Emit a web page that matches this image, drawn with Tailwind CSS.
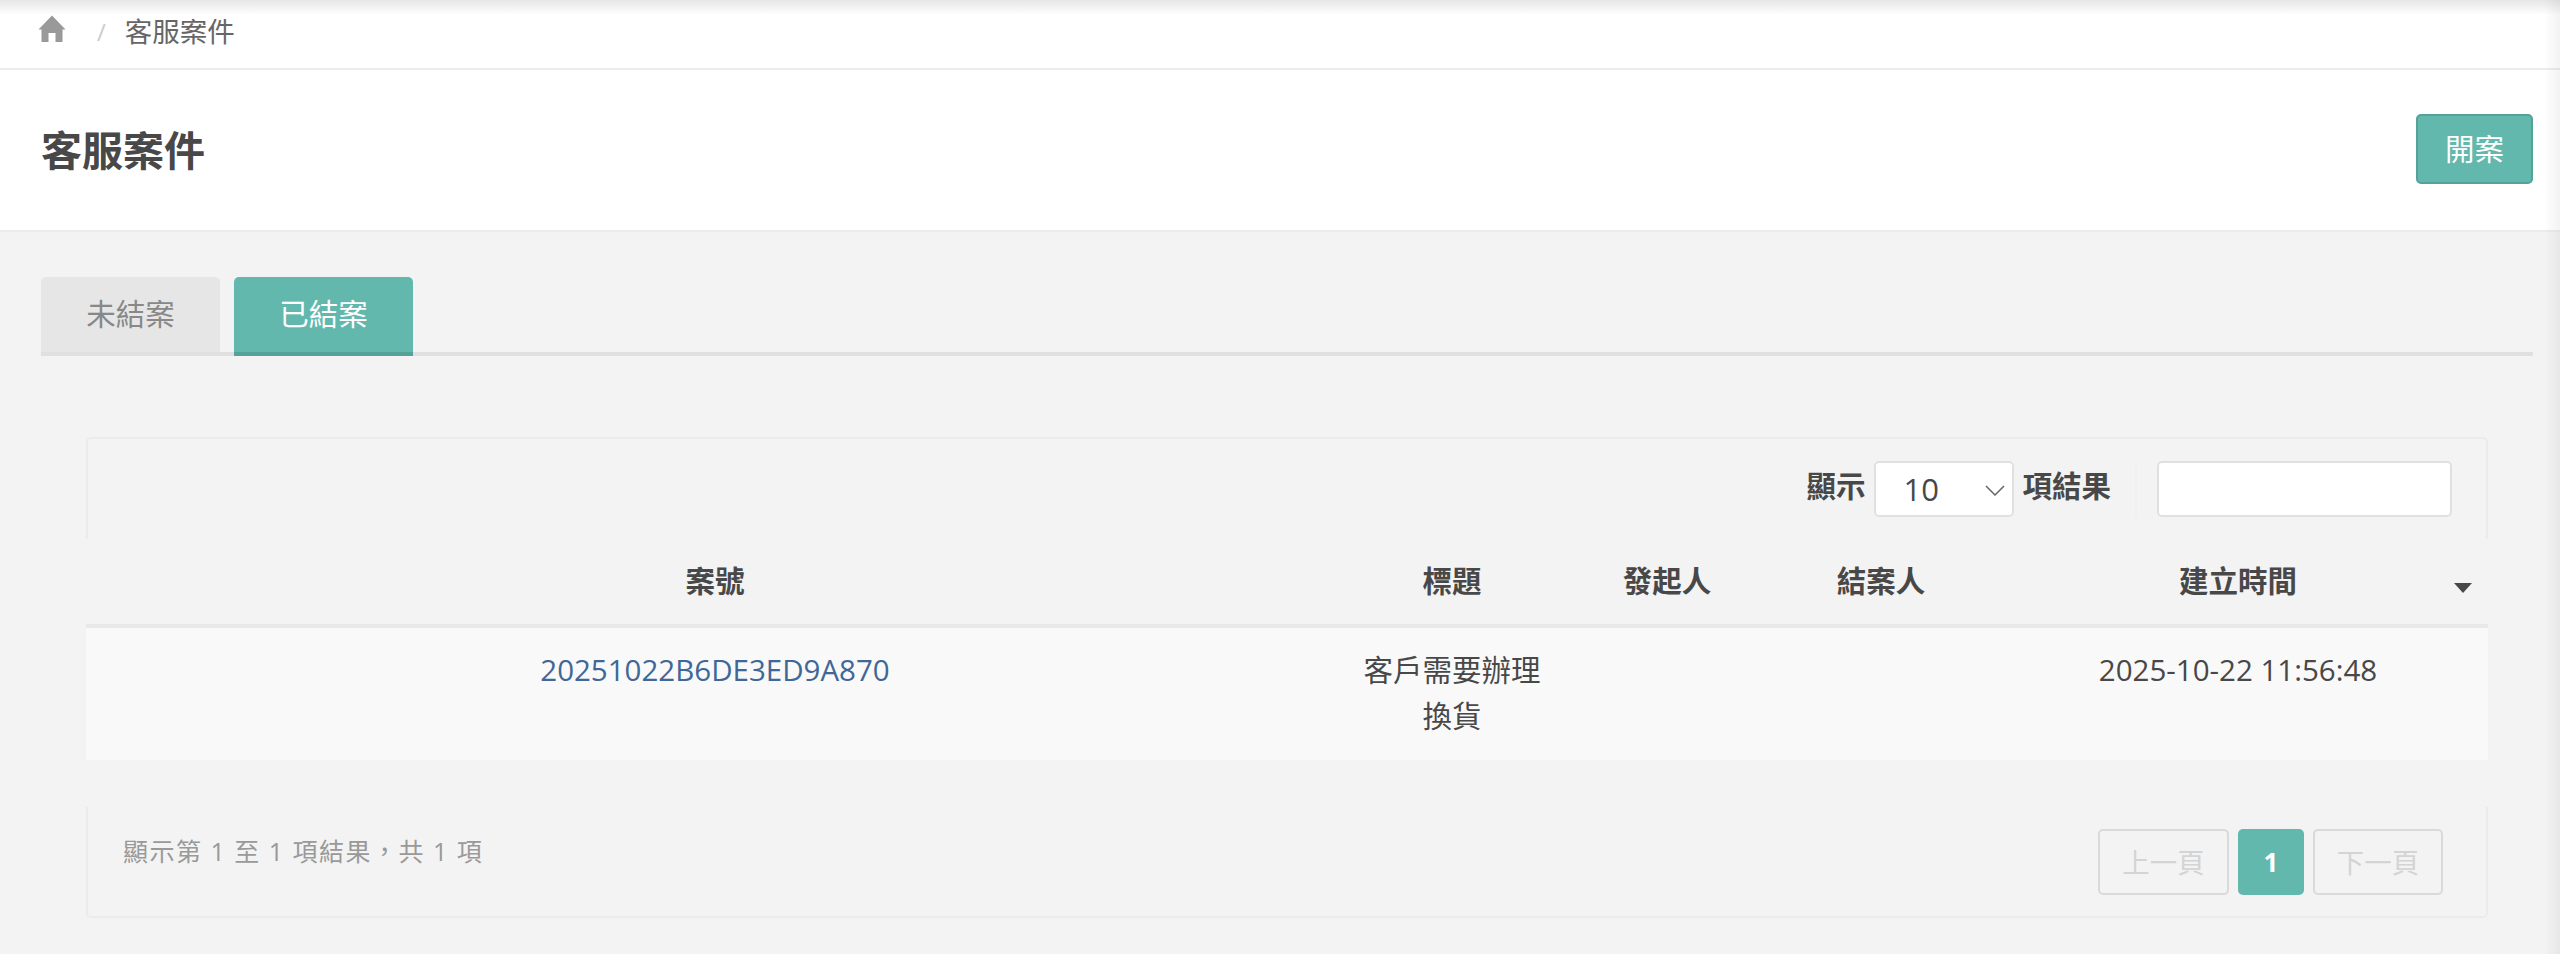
<!DOCTYPE html>
<html lang="zh-Hant">
<head>
    <meta charset="UTF-8">
    <meta name="viewport" content="width=device-width, initial-scale=1.0">
    <title>客服案件</title>
    <script src="https://cdn.jsdelivr.net/npm/@tailwindcss/browser@4"></script>
</head>
<body class="relative w-[2560px] h-[954px] overflow-hidden bg-[#f3f3f3] text-[#484848] text-[29.5px] font-['Open_Sans','Noto_Sans_CJK_TC',sans-serif]">
    <!-- Edge shadows -->
    <div class="absolute inset-x-0 top-0 h-[15px] bg-linear-to-b from-black/10 to-transparent"></div>
    <div class="absolute inset-y-0 right-0 w-[16px] bg-linear-to-l from-black/5 to-transparent"></div>

    <!-- Breadcrumb -->
    <div class="h-[70px] bg-white border-b-2 border-[#ececec] flex items-center pl-[38px] pb-[4px]">
        <svg class="w-[28px] h-[28px] -mt-[6px] text-[#999]" viewBox="0 0 28 28" fill="currentColor">
            <path d="M14 0.500 L27.500 14.500 L24.500 14.500 L24.500 27 L17.500 27 L17.500 18 L10.500 18 L10.500 27 L3.500 27 L3.500 14.500 L0.500 14.500 Z"></path>
        </svg>
        <span class="ml-[31px] text-[24px] text-[#ccc]">/</span>
        <span class="ml-[19px] text-[27.500px] leading-none text-[#666]">客服案件</span>
    </div>

    <!-- Page header -->
    <div class="h-[162px] bg-white border-b-2 border-[#ececec] flex items-center justify-between pl-[41px] pr-[27px]">
        <h1 class="text-[41px] font-bold leading-none">客服案件</h1>
        <button class="w-[117px] h-[70px] -mt-[2px] rounded-[5px] border-2 border-[#55a298] bg-[#62b8ad] text-white text-[29.5px]">開案</button>
    </div>

    <!-- Tabs -->
    <div class="mt-[45px] ml-[41px] mr-[27px] h-[79px] border-b-4 border-[#e0e0e0] flex gap-[14px]">
        <button class="w-[179px] h-[79px] rounded-t-[5px] bg-[#e6e6e6] border-b-4 border-[#e0e0e0] text-[#888] text-[29.5px]">未結案</button>
        <button class="w-[179px] h-[79px] rounded-t-[5px] bg-[#62b8ad] border-b-4 border-[#55a298] text-white text-[29.5px]">已結案</button>
    </div>

    <!-- Table card -->
    <div class="mt-[81px] ml-[86px] w-[2402px]">
        <div class="h-[102px] border-2 border-b-0 border-[#ebebeb] rounded-t-[5px] flex items-start justify-end pt-[22px] pr-[34px]">
            <span class="h-[50px] flex items-center font-bold">顯示</span>
            <div class="relative ml-[9px] w-[140px] h-[56px]">
                <select class="w-full h-full appearance-none bg-white border-2 border-[#e0e0e0] rounded-[5px] pl-[27px] text-[31px] text-[#484848]">
                    <option>10</option>
                </select>
                <svg class="absolute right-[9px] top-[24px] w-[20px] h-[11px] text-[#666]" viewBox="0 0 20 11" fill="none" stroke="currentColor" stroke-width="1.500">
                    <path d="M1 1 L10 10 L19 1"></path>
                </svg>
            </div>
            <span class="ml-[8px] h-[50px] flex items-center font-bold">項結果</span>
            <div class="ml-[24px] h-[56px] border-l-2 border-[#f0f0f0]"></div>
            <input class="ml-[20px] w-[295px] h-[56px] bg-white border-2 border-[#e0e0e0] rounded-[5px]" type="text">
        </div>

        <table class="w-full table-fixed border-collapse text-center">
            <colgroup>
                <col class="w-[1258px]">
                <col class="w-[216px]">
                <col class="w-[214px]">
                <col class="w-[214px]">
                <col class="w-[500px]">
            </colgroup>
            <thead>
                <tr class="h-[87px] border-b-4 border-[#e8e8e8] font-bold">
                    <th class="font-bold">案號</th>
                    <th class="font-bold">標題</th>
                    <th class="font-bold">發起人</th>
                    <th class="font-bold">結案人</th>
                    <th class="relative font-bold">
                        建立時間
                        <span class="absolute right-[16px] top-[44px] w-0 h-0 border-x-[9px] border-x-transparent border-t-[10px] border-t-[#484848]"></span>
                    </th>
                </tr>
            </thead>
            <tbody>
                <tr class="h-[134px] bg-[#f9f9f9] align-top leading-[46px]">
                    <td class="pt-[19px] px-[16px]"><a href="#" class="text-[#3f6797]">20251022B6DE3ED9A870</a></td>
                    <td class="pt-[19px] px-[16px]">客戶需要辦理換貨</td>
                    <td class="pt-[19px] px-[16px]"></td>
                    <td class="pt-[19px] px-[16px]"></td>
                    <td class="pt-[19px] px-[16px]">2025-10-22 11:56:48</td>
                </tr>
            </tbody>
        </table>

        <!-- Footer -->
        <div class="mt-[47px] h-[111px] border-2 border-t-0 border-[#ebebeb] rounded-b-[5px] flex items-start justify-between pt-[22px] pl-[35px] pr-[43px]">
            <span class="mt-[4px] text-[25px] leading-[36px] tracking-[1.500px] text-[#999]">顯示第 1 至 1 項結果&#65292;共 1 項</span>
            <div class="flex gap-[9px]">
                <button class="w-[131px] h-[66px] rounded-[5px] border-2 border-[#d9d9d9] text-[#d4d4d4] text-[27.500px] pt-[2px]">上一頁</button>
                <button class="w-[66px] h-[66px] rounded-[5px] bg-[#62b8ad] text-white text-[26px] font-bold">1</button>
                <button class="w-[130px] h-[66px] rounded-[5px] border-2 border-[#d9d9d9] text-[#d4d4d4] text-[27.500px] pt-[2px]">下一頁</button>
            </div>
        </div>
    </div>
</body>
</html>
